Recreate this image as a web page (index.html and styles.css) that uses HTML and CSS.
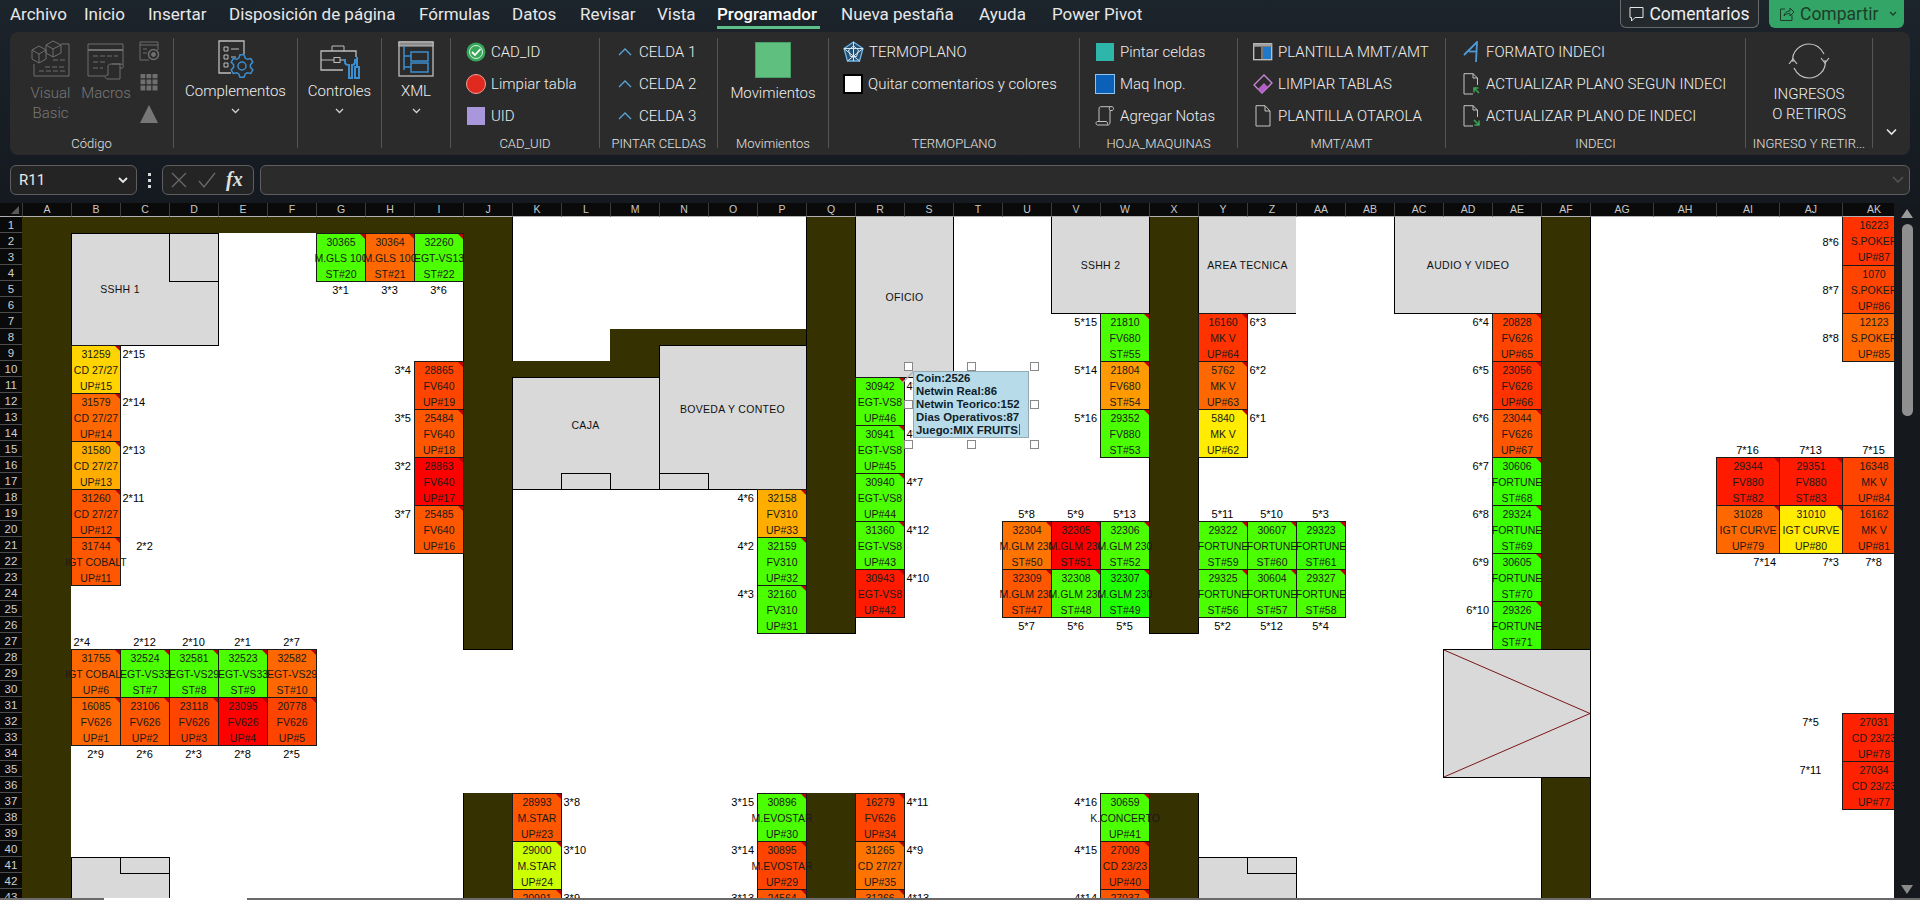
FILE: index.html
```html
<!DOCTYPE html>
<html lang="es">
<head>
<meta charset="utf-8">
<title>Plano de sala</title>
<link rel="stylesheet" href="styles.css">
</head>
<body>
<header class="topbar">
  <nav class="tabs">
    <span class="tab">Archivo</span><span class="tab">Inicio</span><span class="tab">Insertar</span><span class="tab">Disposición de página</span><span class="tab">Fórmulas</span><span class="tab">Datos</span><span class="tab">Revisar</span><span class="tab">Vista</span><span class="tab"><b class="active">Programador</b></span><span class="tab">Nueva pestaña</span><span class="tab">Ayuda</span><span class="tab">Power Pivot</span>
  </nav>
  <div class="actions">
    <button class="comments"><svg width="15" height="18" viewBox="0 0 15 18"><path d="M1 2.500H14V12.500H6L2.500 16V12.500H1Z" fill="none" stroke="#e6e6e6"/></svg>Comentarios</button>
    <button class="share"><svg width="16" height="16" viewBox="0 0 16 16" fill="none" stroke="#1d3d2a"><path d="M6 3H1.500V14.500H13V9"/><path d="M5 10C5.500 6.500 8 5 11 5V2L15 6L11 10V7.500C8.500 7.500 6.500 8 5 10Z"/></svg>Compartir<svg class="share-caret" width="8" height="6" viewBox="0 0 8 6"><path d="M1 1L4 4L7 1" fill="none" stroke="#1d3d2a" stroke-width="1.300"/></svg></button>
  </div>
</header>

<section class="ribbon">
  <div class="group g-code">
    <div class="body code-body">
      <div class="big off vb"><svg width="39" height="37" viewBox="0 0 39 37" fill="none" stroke="#6f6f6f"><path d="M30 4H38V36H3V24"/><path d="M14 27H34M8 31H34M22 20H34" stroke-dasharray="5 2"/><path d="M1 10L8 6L15 10V19L8 23L1 19ZM1 10L8 14L15 10M8 14V23"/><path d="M15 5L22 1L30 5V13L22 17L15 13ZM15 5L22 9L30 5M22 9V17"/></svg><span>Visual<br>Basic</span></div>
      <div class="big off mc"><svg width="38" height="37" viewBox="0 0 38 37" fill="none" stroke="#6f6f6f"><path d="M36 22V1H1V33H18"/><path d="M1 7H36" stroke-width="2"/><path d="M6 13H31M6 19H20M6 25H16" stroke-dasharray="5 2"/><path d="M21 36H33V21H25M21 36C18 36 17 33 20 32H21V23C21 21 24 21 25 21H34C37 21 37 25 35 25H33"/></svg><span>Macros</span></div>
      <div class="mini-col">
        <svg width="21" height="20" viewBox="0 0 21 20" fill="none" stroke="#6f6f6f"><path d="M1 1H19V9M1 1V19H10M1 4H19" /><path d="M4 8H8M4 12H8"/><circle cx="14.500" cy="13.500" r="5" stroke-width="1.500"/><circle cx="14.500" cy="13.500" r="2" fill="#6f6f6f"/></svg>
        <svg width="21" height="19" viewBox="0 0 21 19" fill="#6f6f6f" stroke="#2b2b2b"><rect x="1" y="0.500" width="6" height="5.500"/><rect x="7" y="0.500" width="6" height="5.500"/><rect x="13" y="0.500" width="6" height="5.500"/><rect x="1" y="6" width="6" height="6"/><rect x="7" y="6" width="6" height="6"/><rect x="13" y="6" width="6" height="6"/><rect x="1" y="12" width="6" height="6"/><rect x="7" y="12" width="6" height="6"/><rect x="13" y="12" width="6" height="6"/></svg>
        <svg width="21" height="20" viewBox="0 0 21 20"><path d="M10 1L19 19H1Z" fill="#777"/></svg>
      </div>
    </div>
    <div class="glabel">Código</div>
  </div>
  <div class="group g-add">
    <div class="big"><svg class="ic-add" width="36" height="38" viewBox="0 0 36 38" fill="none" stroke="#bdbdbd"><path d="M13 33H1V1H26V14" stroke-width="1.300"/><path d="M6 7H10V11H6ZM6 15H10V19H6ZM6 23H10V27H6Z"/><path d="M13 9H21M13 17H18"/><g transform="translate(12 14)" stroke="#3b8ed0" stroke-width="1.500"><path d="M8.800 4.100L10 .7H14L15.200 4.100L17.200 5.300L20.800 4.600L22.800 8.100L20.400 10.800V13.200L22.800 15.900L20.800 19.400L17.200 18.700L15.200 19.900L14 23.300H10L8.800 19.900L6.800 18.700L3.200 19.400L1.200 15.900L3.600 13.200V10.800L1.200 8.100L3.200 4.600L6.800 5.300Z"/><circle cx="12" cy="12" r="4"/></g></svg><span>Complementos</span>
      <svg class="caret" width="9" height="6" viewBox="0 0 9 6"><path d="M1 1L4.500 4.500L8 1" fill="none" stroke="#d0d0d0" stroke-width="1.300"/></svg></div>
  </div>
  <div class="group g-ctrl">
    <div class="big"><svg class="ic-ctrl" width="40" height="34" viewBox="0 0 40 34" fill="none" stroke="#bdbdbd"><path d="M23 25H1V6H36V12" stroke-width="1.300"/><path d="M12 6V1H24V6"/><path d="M1 15H14M20 15H25"/><rect x="14" y="12.500" width="6" height="5"/><g stroke="#3b8ed0" stroke-width="2"><path d="M25 14V17C25 19 27 20 29 20V33H32V20C34 20 35 19 35 17V14"/><path d="M37 12V22M35 22H39V33H35Z"/></g></svg><span>Controles</span>
      <svg class="caret" width="9" height="6" viewBox="0 0 9 6"><path d="M1 1L4.500 4.500L8 1" fill="none" stroke="#d0d0d0" stroke-width="1.300"/></svg></div>
  </div>
  <div class="group g-xml">
    <div class="big"><svg class="ic-xml" width="36" height="36" viewBox="0 0 36 36" fill="none" stroke="#bdbdbd"><rect x="1" y="1" width="34" height="34" stroke-width="1.300"/><rect x="1" y="1" width="34" height="4" fill="#8a8a8a"/><g stroke="#3b8ed0" stroke-width="1.500"><path d="M6 5V29M6 15H13M6 26H13"/><rect x="13" y="11" width="17" height="9"/><rect x="13" y="22" width="17" height="9"/></g></svg><span>XML</span>
      <svg class="caret" width="9" height="6" viewBox="0 0 9 6"><path d="M1 1L4.500 4.500L8 1" fill="none" stroke="#d0d0d0" stroke-width="1.300"/></svg></div>
  </div>
  <div class="group g-cad">
    <div class="stack">
      <div class="item"><svg width="20" height="20" viewBox="0 0 20 20"><circle cx="10" cy="10" r="9.500" fill="#37a55a"/><circle cx="10" cy="10" r="6.500" fill="none" stroke="#d8f0df"/><path d="M6 10L9 13L14.500 7" fill="none" stroke="#fff" stroke-width="1.800"/></svg>CAD_ID</div>
      <div class="item"><svg width="20" height="20" viewBox="0 0 20 20"><circle cx="10" cy="10" r="9.500" fill="#e02a20" stroke="#f0a09a" stroke-width="1"/></svg>Limpiar tabla</div>
      <div class="item"><svg width="20" height="20" viewBox="0 0 20 20"><rect x="1" y="1" width="18" height="18" fill="#a897db"/></svg>UID</div>
    </div>
    <div class="glabel">CAD_UID</div>
  </div>
  <div class="group g-paint">
    <div class="stack">
      <div class="item"><svg width="14" height="8" viewBox="0 0 14 8"><path d="M1 7L7 1L13 7" fill="none" stroke="#5aa5dc" stroke-width="1.300"/></svg>CELDA 1</div>
      <div class="item"><svg width="14" height="8" viewBox="0 0 14 8"><path d="M1 7L7 1L13 7" fill="none" stroke="#5aa5dc" stroke-width="1.300"/></svg>CELDA 2</div>
      <div class="item"><svg width="14" height="8" viewBox="0 0 14 8"><path d="M1 7L7 1L13 7" fill="none" stroke="#5aa5dc" stroke-width="1.300"/></svg>CELDA 3</div>
    </div>
    <div class="glabel">PINTAR CELDAS</div>
  </div>
  <div class="group g-mov">
    <div class="big"><i class="mov-square"></i><span>Movimientos</span></div>
    <div class="glabel">Movimientos</div>
  </div>
  <div class="group g-termo">
    <div class="stack">
      <div class="item"><svg width="21" height="22" viewBox="0 0 21 22" fill="none" stroke="#6fb4e6"><path d="M10.500 1L20 7.500L16.500 20H4.500L1 7.500Z" stroke-width="1.300" fill="#26506f"/><path d="M10.500 1V20M1 7.500L16.500 20M20 7.500L4.500 20M1 7.500H20" stroke="#d4e6f2"/><path d="M10.500 5L15.500 9L13.500 15.500H7.500L5.500 9Z" stroke="#d4e6f2"/></svg>TERMOPLANO</div>
      <div class="item"><i class="blank-check"></i>Quitar comentarios y colores</div>
    </div>
    <div class="glabel">TERMOPLANO</div>
  </div>
  <div class="group g-hoja">
    <div class="stack">
      <div class="item"><i class="swatch teal"></i>Pintar celdas</div>
      <div class="item"><i class="swatch blue"></i>Maq Inop.</div>
      <div class="item"><svg width="20" height="20" viewBox="0 0 20 20" fill="none" stroke="#c4c4c4"><path d="M4 16V3C4 1 5 .7 6 .7H17C19 .7 19 4.500 17 4.500H15V16C15 18 14 19 13 19H2.500C.5 19 .5 15.500 2.500 15.500H11.500C12.500 15.500 12.500 19 13 19"/><path d="M15 .7C14 2 14 3.500 15 4.500"/></svg>Agregar Notas</div>
    </div>
    <div class="glabel">HOJA_MAQUINAS</div>
  </div>
  <div class="group g-mmt">
    <div class="stack">
      <div class="item"><svg width="20" height="18" viewBox="0 0 20 18"><rect x=".7" y=".7" width="18" height="16" fill="none" stroke="#c4c4c4" stroke-width="1.300"/><rect x=".7" y=".7" width="18" height="3" fill="#a0a0a0"/><rect x="10" y="4" width="8" height="12" fill="#1f78c8"/><path d="M9 4V16" stroke="#c4c4c4"/></svg>PLANTILLA MMT/AMT</div>
      <div class="item"><svg width="20" height="20" viewBox="0 0 20 20"><path d="M1 11L11 1L19 9L9 19Z" fill="none" stroke="#c886d8" stroke-width="1.300"/><path d="M5 15L11 9L15 13L9 19Z" fill="#b45fc8"/></svg>LIMPIAR TABLAS</div>
      <div class="item"><svg width="20" height="22" viewBox="0 0 20 22" fill="none" stroke="#c4c4c4"><path d="M3 .7H12L17 6V21H3Z"/><path d="M12 .7V6H17"/></svg>PLANTILLA OTAROLA</div>
    </div>
    <div class="glabel">MMT/AMT</div>
  </div>
  <div class="group g-indeci">
    <div class="stack">
      <div class="item"><svg width="18" height="22" viewBox="0 0 18 22" fill="none" stroke="#4f9ad6" stroke-width="1.800"><path d="M1 14L14 1L13 21"/><path d="M6 10.500H13.500"/></svg>FORMATO INDECI</div>
      <div class="item"><svg width="18" height="22" viewBox="0 0 18 22" fill="none"><path d="M10 21H1V.7H10L14.500 5V12M10 .7V5H14.500" stroke="#c4c4c4"/><path d="M16 20L11 15M11 19.500V15H15.500" stroke="#3aa655" stroke-width="1.500"/></svg>ACTUALIZAR PLANO SEGUN INDECI</div>
      <div class="item"><svg width="18" height="22" viewBox="0 0 18 22" fill="none"><path d="M10 21H1V.7H10L14.500 5V12M10 .7V5H14.500" stroke="#c4c4c4"/><path d="M11 15L16 20M16 15.500V20H11.500" stroke="#3aa655" stroke-width="1.500"/></svg>ACTUALIZAR PLANO DE INDECI</div>
    </div>
    <div class="glabel">INDECI</div>
  </div>
  <div class="group g-ing">
    <div class="big"><svg class="ic-ing" width="42" height="36" viewBox="0 0 42 36" fill="none" stroke="#c4c4c4" stroke-width="1.200"><path d="M5 19C3 8 13 1 21 1C28 1 33 5 36 11"/><path d="M37 17C39 28 29 35 21 35C14 35 9 31 6 25"/><path d="M1 15L5 20L9 15M33 21L37 16L41 21" transform="matrix(1 0 0 -1 0 36)"/></svg><span>INGRESOS<br>O RETIROS</span></div>
    <div class="glabel">INGRESO Y RETIR...</div>
  </div>
  <div class="collapse"><svg width="11" height="8" viewBox="0 0 11 8"><path d="M1 1.500L5.500 6L10 1.500" fill="none" stroke="#e6e6e6" stroke-width="1.600"/></svg></div>
</section>

<section class="formula">
  <div class="namebox"><span>R11</span><svg width="10" height="7" viewBox="0 0 10 7"><path d="M1 1L5 5L9 1" fill="none" stroke="#e8e8e8" stroke-width="1.800"/></svg></div>
  <div class="grip"><i></i><i></i><i></i></div>
  <div class="fxbox">
    <svg width="16" height="16" viewBox="0 0 16 16"><path d="M1 1L15 15M15 1L1 15" stroke="#6a6a6a" stroke-width="1.300"/></svg>
    <svg width="18" height="16" viewBox="0 0 18 16"><path d="M1 9L6 15L17 1" fill="none" stroke="#6a6a6a" stroke-width="1.300"/></svg>
    <span class="fx">fx</span>
  </div>
  <div class="input"><svg width="12" height="8" viewBox="0 0 12 8"><path d="M1 1L6 6L11 1" fill="none" stroke="#555" stroke-width="1.500"/></svg></div>
</section>

<main class="sheetwrap">
  <div class="sheet">
    <div class="corner"><svg width="8" height="8" viewBox="0 0 8 8"><path d="M8 0V8H0Z" fill="#5a5a5a"/></svg></div>
    <div class="ch col-A">A</div><div class="ch col-B">B</div><div class="ch col-C">C</div><div class="ch col-D">D</div><div class="ch col-E">E</div><div class="ch col-F">F</div><div class="ch col-G">G</div><div class="ch col-H">H</div><div class="ch col-I">I</div><div class="ch col-J">J</div><div class="ch col-K">K</div><div class="ch col-L">L</div><div class="ch col-M">M</div><div class="ch col-N">N</div><div class="ch col-O">O</div><div class="ch col-P">P</div><div class="ch col-Q">Q</div><div class="ch col-R">R</div><div class="ch col-S">S</div><div class="ch col-T">T</div><div class="ch col-U">U</div><div class="ch col-V">V</div><div class="ch col-W">W</div><div class="ch col-X">X</div><div class="ch col-Y">Y</div><div class="ch col-Z">Z</div><div class="ch col-AA">AA</div><div class="ch col-AB">AB</div><div class="ch col-AC">AC</div><div class="ch col-AD">AD</div><div class="ch col-AE">AE</div><div class="ch col-AF">AF</div><div class="ch col-AG">AG</div><div class="ch col-AH">AH</div><div class="ch col-AI">AI</div><div class="ch col-AJ">AJ</div><div class="ch col-AK">AK</div>

    <div class="rh row-1">1</div><div class="rh row-2">2</div><div class="rh row-3">3</div><div class="rh row-4">4</div><div class="rh row-5">5</div><div class="rh row-6">6</div><div class="rh row-7">7</div><div class="rh row-8">8</div><div class="rh row-9">9</div><div class="rh row-10">10</div><div class="rh row-11">11</div><div class="rh row-12">12</div><div class="rh row-13">13</div><div class="rh row-14">14</div><div class="rh row-15">15</div><div class="rh row-16">16</div><div class="rh row-17">17</div><div class="rh row-18">18</div><div class="rh row-19">19</div><div class="rh row-20">20</div><div class="rh row-21">21</div><div class="rh row-22">22</div><div class="rh row-23">23</div><div class="rh row-24">24</div><div class="rh row-25">25</div><div class="rh row-26">26</div><div class="rh row-27">27</div><div class="rh row-28">28</div><div class="rh row-29">29</div><div class="rh row-30">30</div><div class="rh row-31">31</div><div class="rh row-32">32</div><div class="rh row-33">33</div><div class="rh row-34">34</div><div class="rh row-35">35</div><div class="rh row-36">36</div><div class="rh row-37">37</div><div class="rh row-38">38</div><div class="rh row-39">39</div><div class="rh row-40">40</div><div class="rh row-41">41</div><div class="rh row-42">42</div><div class="rh row-43">43</div>

    <!-- muros -->
    <div class="wall col-A row-1 to-end bare"></div>
    <div class="wall col-J row-1 h27"></div>
    <div class="wall col-A w10 row-1 bare"></div>
    <div class="wall col-Q row-1 h26"></div>
    <div class="wall col-X row-1 h26"></div>
    <div class="wall col-AF row-1 h35"></div>
    <div class="wall col-K w3 row-10 bare"></div>
    <div class="wall col-M row-8 h3 bare"></div>
    <div class="wall col-M w4 row-8 bare"></div>
    <div class="wall col-J row-37 to-end"></div>
    <div class="wall col-Q row-37 to-end"></div>
    <div class="wall col-X row-37 to-end"></div>
    <div class="wall col-AF row-36 to-end"></div>

    <!-- ambientes -->
    <div class="room col-B w3 row-2 h7"></div>
    <div class="room col-D row-2 h3"></div>
    <div class="tag col-B w2 row-5">SSHH 1</div>
    <div class="room col-K w3 row-11 h7"></div>
    <div class="room col-L row-17"></div>
    <div class="tag col-K w3 row-13 h2">CAJA</div>
    <div class="room col-N w3 row-9 h9"></div>
    <div class="room col-N row-17"></div>
    <div class="tag col-N w3 row-12 h2">BOVEDA Y CONTEO</div>
    <div class="room col-R w2 row-1 h10 notop">OFICIO</div>
    <div class="room col-V w2 row-1 h6 notop">SSHH 2</div>
    <div class="room col-Y w2 row-1 h6 notop noright">AREA TECNICA</div>
    <div class="room col-AC w3 row-1 h6 notop">AUDIO Y VIDEO</div>
    <div class="room col-B w2 row-41 to-end"></div>
    <div class="room col-C row-41"></div>
    <div class="room col-Y w2 row-41 to-end"></div>
    <div class="room col-Z row-41"></div>
    <div class="room ramp col-AD w3 row-28 h8"><svg width="100%" height="100%" viewBox="0 0 100 100" preserveAspectRatio="none"><path d="M0 0L100 50L0 100" fill="none" stroke="#7b1616" vector-effect="non-scaling-stroke"/></svg></div>

    <!-- maquinas -->
    <div class="m col-G row-2 g1"><span>30365</span><span>M.GLS 100</span><span>ST#20</span></div>
    <div class="m col-H row-2 o2"><span>30364</span><span>M.GLS 100</span><span>ST#21</span></div>
    <div class="m col-I row-2 g1"><span>32260</span><span>EGT-VS13</span><span>ST#22</span></div>
    <div class="m col-B row-9 y2"><span>31259</span><span>CD 27/27</span><span>UP#15</span></div>
    <div class="m col-B row-12 o2"><span>31579</span><span>CD 27/27</span><span>UP#14</span></div>
    <div class="m col-B row-15 a1"><span>31580</span><span>CD 27/27</span><span>UP#13</span></div>
    <div class="m col-B row-18 o3"><span>31260</span><span>CD 27/27</span><span>UP#12</span></div>
    <div class="m col-B row-21 o3"><span>31744</span><span>IGT COBALT</span><span>UP#11</span></div>
    <div class="m col-I row-10 o4"><span>28865</span><span>FV640</span><span>UP#19</span></div>
    <div class="m col-I row-13 o3"><span>25484</span><span>FV640</span><span>UP#18</span></div>
    <div class="m col-I row-16 r0"><span>28863</span><span>FV640</span><span>UP#17</span></div>
    <div class="m col-I row-19 o3"><span>25485</span><span>FV640</span><span>UP#16</span></div>

    <div class="m col-B row-28 o2"><span>31755</span><span>IGT COBALT</span><span>UP#6</span></div>
    <div class="m col-C row-28 g1"><span>32524</span><span>EGT-VS33</span><span>ST#7</span></div>
    <div class="m col-D row-28 g1"><span>32581</span><span>EGT-VS29</span><span>ST#8</span></div>
    <div class="m col-E row-28 g1"><span>32523</span><span>EGT-VS33</span><span>ST#9</span></div>
    <div class="m col-F row-28 o2"><span>32582</span><span>EGT-VS29</span><span>ST#10</span></div>
    <div class="m col-B row-31 o2"><span>16085</span><span>FV626</span><span>UP#1</span></div>
    <div class="m col-C row-31 o3"><span>23106</span><span>FV626</span><span>UP#2</span></div>
    <div class="m col-D row-31 o4"><span>23118</span><span>FV626</span><span>UP#3</span></div>
    <div class="m col-E row-31 r0"><span>23095</span><span>FV626</span><span>UP#4</span></div>
    <div class="m col-F row-31 o4"><span>20778</span><span>FV626</span><span>UP#5</span></div>

    <div class="m col-P row-18 a1"><span>32158</span><span>FV310</span><span>UP#33</span></div>
    <div class="m col-P row-21 g1"><span>32159</span><span>FV310</span><span>UP#32</span></div>
    <div class="m col-P row-24 g1"><span>32160</span><span>FV310</span><span>UP#31</span></div>
    <div class="m col-R row-11 g1"><span>30942</span><span>EGT-VS8</span><span>UP#46</span></div>
    <div class="m col-R row-14 g1"><span>30941</span><span>EGT-VS8</span><span>UP#45</span></div>
    <div class="m col-R row-17 g1"><span>30940</span><span>EGT-VS8</span><span>UP#44</span></div>
    <div class="m col-R row-20 g1"><span>31360</span><span>EGT-VS8</span><span>UP#43</span></div>
    <div class="m col-R row-23 r1"><span>30943</span><span>EGT-VS8</span><span>UP#42</span></div>

    <div class="m col-U row-20 o1"><span>32304</span><span>M.GLM 230</span><span>ST#50</span></div>
    <div class="m col-V row-20 r0"><span>32305</span><span>M.GLM 230</span><span>ST#51</span></div>
    <div class="m col-W row-20 g1"><span>32306</span><span>M.GLM 230</span><span>ST#52</span></div>
    <div class="m col-U row-23 o3"><span>32309</span><span>M.GLM 230</span><span>ST#47</span></div>
    <div class="m col-V row-23 g1"><span>32308</span><span>M.GLM 230</span><span>ST#48</span></div>
    <div class="m col-W row-23 g3"><span>32307</span><span>M.GLM 230</span><span>ST#49</span></div>
    <div class="m col-Y row-20 g1"><span>29322</span><span>FORTUNE</span><span>ST#59</span></div>
    <div class="m col-Z row-20 g1"><span>30607</span><span>FORTUNE</span><span>ST#60</span></div>
    <div class="m col-AA row-20 g2"><span>29323</span><span>FORTUNE</span><span>ST#61</span></div>
    <div class="m col-Y row-23 g1"><span>29325</span><span>FORTUNE</span><span>ST#56</span></div>
    <div class="m col-Z row-23 g1"><span>30604</span><span>FORTUNE</span><span>ST#57</span></div>
    <div class="m col-AA row-23 g1"><span>29327</span><span>FORTUNE</span><span>ST#58</span></div>

    <div class="m col-W row-7 g1"><span>21810</span><span>FV680</span><span>ST#55</span></div>
    <div class="m col-W row-10 a2"><span>21804</span><span>FV680</span><span>ST#54</span></div>
    <div class="m col-W row-13 g1"><span>29352</span><span>FV880</span><span>ST#53</span></div>
    <div class="m col-Y row-7 o5"><span>16160</span><span>MK V</span><span>UP#64</span></div>
    <div class="m col-Y row-10 o2"><span>5762</span><span>MK V</span><span>UP#63</span></div>
    <div class="m col-Y row-13 y1"><span>5840</span><span>MK V</span><span>UP#62</span></div>
    <div class="m col-AE row-7 o4"><span>20828</span><span>FV626</span><span>UP#65</span></div>
    <div class="m col-AE row-10 o5"><span>23056</span><span>FV626</span><span>UP#66</span></div>
    <div class="m col-AE row-13 o3"><span>23044</span><span>FV626</span><span>UP#67</span></div>
    <div class="m col-AE row-16 g2"><span>30606</span><span>FORTUNE</span><span>ST#68</span></div>
    <div class="m col-AE row-19 g2"><span>29324</span><span>FORTUNE</span><span>ST#69</span></div>
    <div class="m col-AE row-22 g2"><span>30605</span><span>FORTUNE</span><span>ST#70</span></div>
    <div class="m col-AE row-25 g2"><span>29326</span><span>FORTUNE</span><span>ST#71</span></div>

    <div class="m col-AK row-1 o5 notop"><span>16223</span><span>S.POKER</span><span>UP#87</span></div>
    <div class="m col-AK row-4 o4"><span>1070</span><span>S.POKER</span><span>UP#86</span></div>
    <div class="m col-AK row-7 o2"><span>12123</span><span>S.POKER</span><span>UP#85</span></div>
    <div class="m col-AI row-16 r1"><span>29344</span><span>FV880</span><span>ST#82</span></div>
    <div class="m col-AJ row-16 r1"><span>29351</span><span>FV880</span><span>ST#83</span></div>
    <div class="m col-AK row-16 o4"><span>16348</span><span>MK V</span><span>UP#84</span></div>
    <div class="m col-AI row-19 o2"><span>31028</span><span>IGT CURVE</span><span>UP#79</span></div>
    <div class="m col-AJ row-19 y1"><span>31010</span><span>IGT CURVE</span><span>UP#80</span></div>
    <div class="m col-AK row-19 o4"><span>16162</span><span>MK V</span><span>UP#81</span></div>
    <div class="m col-AK row-32 r2"><span>27031</span><span>CD 23/23</span><span>UP#78</span></div>
    <div class="m col-AK row-35 r2"><span>27034</span><span>CD 23/23</span><span>UP#77</span></div>

    <div class="m col-K row-37 o3"><span>28993</span><span>M.STAR</span><span>UP#23</span></div>
    <div class="m col-K row-40 lime"><span>29000</span><span>M.STAR</span><span>UP#24</span></div>
    <div class="m col-K row-43 o2"><span>20991</span></div>
    <div class="m col-P row-37 g1"><span>30896</span><span>M.EVOSTAR</span><span>UP#30</span></div>
    <div class="m col-P row-40 o4"><span>30895</span><span>M.EVOSTAR</span><span>UP#29</span></div>
    <div class="m col-P row-43 o3"><span>24564</span></div>
    <div class="m col-R row-37 o4"><span>16279</span><span>FV626</span><span>UP#34</span></div>
    <div class="m col-R row-40 o1"><span>31265</span><span>CD 27/27</span><span>UP#35</span></div>
    <div class="m col-R row-43 o2"><span>31266</span></div>
    <div class="m col-W row-37 g1"><span>30659</span><span>K.CONCERTO</span><span>UP#41</span></div>
    <div class="m col-W row-40 o4"><span>27009</span><span>CD 23/23</span><span>UP#40</span></div>
    <div class="m col-W row-43 o3"><span>27037</span></div>

    <!-- ubicaciones -->
    <div class="lb col-G row-5">3*1</div><div class="lb col-H row-5">3*3</div><div class="lb col-I row-5">3*6</div>
    <div class="lb l col-C row-9">2*15</div><div class="lb l col-C row-12">2*14</div><div class="lb l col-C row-15">2*13</div><div class="lb l col-C row-18">2*11</div><div class="lb col-C row-21">2*2</div>
    <div class="lb e col-H row-10">3*4</div><div class="lb e col-H row-13">3*5</div><div class="lb e col-H row-16">3*2</div><div class="lb e col-H row-19">3*7</div>
    <div class="lb l col-B row-27">2*4</div><div class="lb col-C row-27">2*12</div><div class="lb col-D row-27">2*10</div><div class="lb col-E row-27">2*1</div><div class="lb col-F row-27">2*7</div>
    <div class="lb col-B row-34">2*9</div><div class="lb col-C row-34">2*6</div><div class="lb col-D row-34">2*3</div><div class="lb col-E row-34">2*8</div><div class="lb col-F row-34">2*5</div>
    <div class="lb e col-O row-18">4*6</div><div class="lb e col-O row-21">4*2</div><div class="lb e col-O row-24">4*3</div>
    <div class="lb l col-S row-11">4*5</div><div class="lb l col-S row-14">4*8</div><div class="lb l col-S row-17">4*7</div><div class="lb l col-S row-20">4*12</div><div class="lb l col-S row-23">4*10</div>
    <div class="lb col-U row-19">5*8</div><div class="lb col-V row-19">5*9</div><div class="lb col-W row-19">5*13</div><div class="lb col-Y row-19">5*11</div><div class="lb col-Z row-19">5*10</div><div class="lb col-AA row-19">5*3</div>
    <div class="lb col-U row-26">5*7</div><div class="lb col-V row-26">5*6</div><div class="lb col-W row-26">5*5</div><div class="lb col-Y row-26">5*2</div><div class="lb col-Z row-26">5*12</div><div class="lb col-AA row-26">5*4</div>
    <div class="lb e col-V row-7">5*15</div><div class="lb e col-V row-10">5*14</div><div class="lb e col-V row-13">5*16</div>
    <div class="lb l col-Z row-7">6*3</div><div class="lb l col-Z row-10">6*2</div><div class="lb l col-Z row-13">6*1</div>
    <div class="lb e col-AD row-7">6*4</div><div class="lb e col-AD row-10">6*5</div><div class="lb e col-AD row-13">6*6</div><div class="lb e col-AD row-16">6*7</div><div class="lb e col-AD row-19">6*8</div><div class="lb e col-AD row-22">6*9</div><div class="lb e col-AD row-25">6*10</div>
    <div class="lb e col-AJ row-2">8*6</div><div class="lb e col-AJ row-5">8*7</div><div class="lb e col-AJ row-8">8*8</div>
    <div class="lb col-AI row-15">7*16</div><div class="lb col-AJ row-15">7*13</div><div class="lb col-AK row-15">7*15</div>
    <div class="lb e col-AI row-22">7*14</div><div class="lb e col-AJ row-22">7*3</div><div class="lb col-AK row-22">7*8</div>
    <div class="lb col-AJ row-32">7*5</div><div class="lb col-AJ row-35">7*11</div>
    <div class="lb l col-L row-37">3*8</div><div class="lb l col-L row-40">3*10</div><div class="lb l col-L row-43">3*9</div>
    <div class="lb e col-O row-37">3*15</div><div class="lb e col-O row-40">3*14</div><div class="lb e col-O row-43">3*13</div>
    <div class="lb l col-S row-37">4*11</div><div class="lb l col-S row-40">4*9</div><div class="lb l col-S row-43">4*13</div>
    <div class="lb e col-V row-37">4*16</div><div class="lb e col-V row-40">4*15</div><div class="lb e col-V row-43">4*14</div>

    <!-- comentario seleccionado -->
    <div class="note">
      <svg class="note-lead" width="12" height="12" viewBox="0 0 12 12"><path d="M12 0L0 12" stroke="#b0b0b0" stroke-width="1.500"/></svg>
      <p>Coin:2526</p><p>Netwin Real:86</p><p>Netwin Teorico:152</p><p>Dias Operativos:87</p><p>Juego:MIX FRUITS<i class="caretbar"></i></p>
      <i class="h tl"></i><i class="h tm"></i><i class="h tr"></i><i class="h ml"></i><i class="h mr"></i><i class="h bl"></i><i class="h bm"></i><i class="h br"></i>
    </div>
  </div>
  <aside class="vscroll">
    <svg width="12" height="9" viewBox="0 0 12 9"><path d="M6 0L12 9H0Z" fill="#9a9a9a"/></svg>
    <i class="thumb"></i>
    <svg class="down" width="12" height="9" viewBox="0 0 12 9"><path d="M6 9L0 0H12Z" fill="#8a8a8a"/></svg>
  </aside>
</main>
<footer class="hscroll"><i class="hs-a"></i><i class="hs-b"></i><i class="hs-c"></i></footer>
</body>
</html>
```

FILE: styles.css
```css
* { box-sizing: border-box; }
html, body { margin: 0; height: 100%; }
body {
  width: 1920px; height: 900px; overflow: hidden;
  background: linear-gradient(#1c242c 0, #1a2027 60px, #141a20 200px);
  font-family: Roboto, "Liberation Sans", sans-serif;
  color: #e8e8e8;
  display: flex; flex-direction: column;
}

/* top bar */
.topbar { height: 32px; display: flex; flex: none; }
.tabs {
  padding-left: 10px; flex: 1;
  display: grid;
  grid-template-columns: 74px 64px 81px 190px 93px 68px 77px 60px 124px 138px 73px auto;
  font-size: 17px; line-height: 22px; padding-top: 3px; align-items: start;
}
.tab b { display: inline-block; font-weight: 500; color: #fff; border-bottom: 3px solid #5dbf8a; padding-bottom: 1px; width: 103px; }
.actions { display: flex; width: 310px; flex: none; gap: 10px; padding-right: 16px; justify-content: flex-end; }
.actions button { font: inherit; font-size: 17.5px; height: 28px; display: flex; align-items: center; gap: 5px; border-radius: 0 0 6px 6px; padding: 0; flex: none; }
.comments { width: 139px; background: #24292e; border: 1px solid #6a6a6a; border-top: 0; color: #eee; justify-content: center; }
.share { width: 135px; background: #33a566; border: 0; color: #1d3d2a; padding-left: 10px !important; }
.share-caret { margin-left: 6px; }

/* ribbon */
.ribbon {
  flex: none; height: 123px; margin: 0 10px; width: 1900px;
  background: #2b2b2b; border-radius: 8px;
  display: flex; padding-top: 6px;
  font-size: 15px; font-weight: 300; color: #efefef;
}
.group { height: 110px; border-right: 1px solid #555; display: flex; flex-direction: column; flex: none; }
.glabel { height: 16px; line-height: 16px; margin-bottom: -4px; text-align: center; font-size: 13px; white-space: nowrap; color: #e4e4e4; flex: none; }
.g-code { width: 164px; }
.g-add { width: 124px; }
.g-ctrl { width: 84px; }
.g-xml { width: 69px; }
.g-cad { width: 149px; }
.g-paint { width: 118px; }
.g-mov { width: 111px; }
.g-termo { width: 251px; }
.g-hoja { width: 158px; }
.g-mmt { width: 208px; }
.g-indeci { width: 300px; }
.g-ing { width: 127px; }
.collapse { flex: 1; display: flex; align-items: flex-end; justify-content: center; padding-bottom: 12px; height: 110px; }

.big { display: flex; flex-direction: column; align-items: center; text-align: center; line-height: 20px; flex: 1; }
.big span { white-space: nowrap; }
.caret { margin-top: 7px; }
.code-body { display: flex; flex: 1; color: #787878; }
.off { flex: none; padding-top: 2px; }
.off span { margin-top: 6px; }
.vb { width: 39px; margin-left: 21px; }
.mc { width: 38px; margin-left: 17px; padding-top: 5px; }
.mc span { margin-top: 3px; }
.mini-col { display: flex; flex-direction: column; margin-left: 14px; gap: 12px; padding-top: 3px; }
.ic-add { margin-top: 2px; margin-bottom: 3px; }
.ic-ctrl { margin-top: 7px; margin-bottom: 2px; }
.ic-xml { margin-top: 3px; margin-bottom: 4px; }
.ic-ing { margin-top: 5px; margin-bottom: 5px; }
.mov-square { display: block; width: 36px; height: 36px; background: #5fbf7f; border: 1px solid #4b9d67; margin: 4px 0 5px; }

.stack { flex: 1; display: grid; grid-template-rows: repeat(3, 32px); margin-top: -2px; align-content: start; }
.item { display: flex; align-items: center; gap: 5px; white-space: nowrap; }
.g-cad .stack { padding-left: 15px; }
.g-paint .stack { padding-left: 18px; }
.g-paint .item { gap: 7px; }
.g-termo .stack { padding-left: 14px; }
.g-hoja .stack { padding-left: 15px; }
.g-mmt .stack { padding-left: 15px; }
.g-indeci .stack { padding-left: 17px; }
.blank-check { width: 20px; height: 20px; background: #fff; border: 2px solid #000; flex: none; }
.swatch { width: 20px; height: 20px; flex: none; }
.swatch.teal { background: #2fb6ab; border: 1px solid #2b2b2b; }
.swatch.blue { background: #0b60b8; border: 1px solid #8cc4ee; }

/* formula bar */
.formula { flex: none; height: 30px; margin: 10px 10px 0; width: 1900px; display: flex; }
.namebox { width: 127px; height: 30px; border: 1px solid #5e5e5e; border-radius: 6px; background: #242424; display: flex; align-items: center; justify-content: space-between; padding: 0 8px; font-size: 15px; }
.grip { width: 25px; display: flex; flex-direction: column; align-items: center; justify-content: center; gap: 3px; }
.grip i { width: 3px; height: 3px; background: #d8d8d8; display: block; }
.fxbox { width: 92px; height: 30px; border: 1px solid #5e5e5e; border-radius: 6px; background: #242424; display: flex; align-items: center; padding-left: 8px; gap: 11px; }
.fx { font-family: "Liberation Serif", serif; font-style: italic; font-weight: 700; font-size: 20px; color: #e0e0e0; line-height: 20px; margin-top: -3px; margin-left: -1px; }
.input { margin-left: 6px; flex: 1; height: 30px; border: 1px solid #5e5e5e; border-radius: 6px; background: #2b2b2b; display: flex; align-items: center; justify-content: flex-end; padding-right: 5px; }

/* sheet */
.sheetwrap { flex: none; height: 695px; margin-top: 8px; display: flex; width: 1920px; }
.sheet {
  width: 1894px; height: 695px; overflow: hidden; position: relative;
  background: #fff;
  display: grid;
  grid-template-columns: 22px repeat(32, 49px) repeat(5, 63px);
  grid-template-rows: 14px repeat(44, 16px);
  font-family: "Liberation Sans", sans-serif;
  font-size: 10.5px; color: #111;
}
.corner { grid-column: 1; grid-row: 1; background: #0c0c0c; border-bottom: 1px solid #b0b0b0; display: flex; align-items: center; justify-content: flex-end; padding-right: 3px; }
.ch { grid-row: 1; background: #0a0a0a; color: #c8c8c8; border-left: 1px solid #3c3c3c; border-bottom: 1px solid #b0b0b0; font-size: 10.5px; text-align: center; line-height: 13px; }
.rh { grid-column: 1; background: #0a0a0a; color: #cfcfcf; border-bottom: 1px solid #4c4c4c; font-size: 11.5px; line-height: 16px; text-align: center; }

.col-A { grid-column-start: 2; } .col-B { grid-column-start: 3; } .col-C { grid-column-start: 4; } .col-D { grid-column-start: 5; } .col-E { grid-column-start: 6; } .col-F { grid-column-start: 7; } .col-G { grid-column-start: 8; } .col-H { grid-column-start: 9; } .col-I { grid-column-start: 10; } .col-J { grid-column-start: 11; } .col-K { grid-column-start: 12; } .col-L { grid-column-start: 13; } .col-M { grid-column-start: 14; } .col-N { grid-column-start: 15; } .col-O { grid-column-start: 16; } .col-P { grid-column-start: 17; } .col-Q { grid-column-start: 18; } .col-R { grid-column-start: 19; } .col-S { grid-column-start: 20; } .col-T { grid-column-start: 21; } .col-U { grid-column-start: 22; } .col-V { grid-column-start: 23; } .col-W { grid-column-start: 24; } .col-X { grid-column-start: 25; } .col-Y { grid-column-start: 26; } .col-Z { grid-column-start: 27; } .col-AA { grid-column-start: 28; } .col-AB { grid-column-start: 29; } .col-AC { grid-column-start: 30; } .col-AD { grid-column-start: 31; } .col-AE { grid-column-start: 32; } .col-AF { grid-column-start: 33; } .col-AG { grid-column-start: 34; } .col-AH { grid-column-start: 35; } .col-AI { grid-column-start: 36; } .col-AJ { grid-column-start: 37; } .col-AK { grid-column-start: 38; }

.row-1 { grid-row-start: 2; } .row-2 { grid-row-start: 3; } .row-3 { grid-row-start: 4; } .row-4 { grid-row-start: 5; } .row-5 { grid-row-start: 6; } .row-6 { grid-row-start: 7; } .row-7 { grid-row-start: 8; } .row-8 { grid-row-start: 9; } .row-9 { grid-row-start: 10; } .row-10 { grid-row-start: 11; } .row-11 { grid-row-start: 12; } .row-12 { grid-row-start: 13; } .row-13 { grid-row-start: 14; } .row-14 { grid-row-start: 15; } .row-15 { grid-row-start: 16; } .row-16 { grid-row-start: 17; } .row-17 { grid-row-start: 18; } .row-18 { grid-row-start: 19; } .row-19 { grid-row-start: 20; } .row-20 { grid-row-start: 21; } .row-21 { grid-row-start: 22; } .row-22 { grid-row-start: 23; } .row-23 { grid-row-start: 24; } .row-24 { grid-row-start: 25; } .row-25 { grid-row-start: 26; } .row-26 { grid-row-start: 27; } .row-27 { grid-row-start: 28; } .row-28 { grid-row-start: 29; } .row-29 { grid-row-start: 30; } .row-30 { grid-row-start: 31; } .row-31 { grid-row-start: 32; } .row-32 { grid-row-start: 33; } .row-33 { grid-row-start: 34; } .row-34 { grid-row-start: 35; } .row-35 { grid-row-start: 36; } .row-36 { grid-row-start: 37; } .row-37 { grid-row-start: 38; } .row-38 { grid-row-start: 39; } .row-39 { grid-row-start: 40; } .row-40 { grid-row-start: 41; } .row-41 { grid-row-start: 42; } .row-42 { grid-row-start: 43; } .row-43 { grid-row-start: 44; }

.w2 { grid-column-end: span 2; } .w3 { grid-column-end: span 3; } .w4 { grid-column-end: span 4; } .w10 { grid-column-end: span 10; }
.h2 { grid-row-end: span 2; } .h3 { grid-row-end: span 3; } .h6 { grid-row-end: span 6; } .h7 { grid-row-end: span 7; } .h8 { grid-row-end: span 8; } .h9 { grid-row-end: span 9; } .h10 { grid-row-end: span 10; } .h26 { grid-row-end: span 26; } .h27 { grid-row-end: span 27; } .h35 { grid-row-end: span 35; }
.to-end { grid-row-end: -1; }

.wall { background: #363100; border: 1px solid #000; border-top: 0; margin: 0 -1px -1px 0; }
.wall.bare { border: 0; margin: 0; }
.room { background: #d9d9d9; border: 1px solid #000; margin: 0 -1px -1px 0; display: flex; align-items: center; justify-content: center; white-space: nowrap; letter-spacing: .3px; }
.room.notop { border-top: 0; }
.room.noright { border-right: 0; margin-right: 0; }
.tag { display: flex; align-items: center; justify-content: center; white-space: nowrap; letter-spacing: .3px; }
.ramp { display: block; }
.ramp svg { display: block; }

.m {
  grid-row-end: span 3; margin: 0 -1px -1px 0; position: relative;
  border: 1px solid #1a1a1a;
  display: grid; grid-template-columns: minmax(0, 1fr); grid-template-rows: 16px 16px 15px; justify-items: center;
  line-height: 16px; white-space: nowrap; color: #1a1a1a;
}
.m::after { content: ""; position: absolute; top: 0; right: 0; border-top: 5px solid #c00000; border-left: 5px solid transparent; }
.m.notop { border-top: 0; }
.lb { line-height: 18px; white-space: nowrap; text-align: center; font-size: 11px; color: #000; }
.lb.l { text-align: left; padding-left: 2.500px; }
.lb.e { text-align: right; padding-right: 3px; }

.g1 { background: #4cff00; } .g2 { background: #3aff00; } .g3 { background: #1eff00; }
.lime { background: #ccff00; } .y1 { background: #ffec00; } .y2 { background: #ffd400; }
.a1 { background: #ffae00; } .a2 { background: #ff9a00; }
.o1 { background: #ff7400; } .o2 { background: #ff6800; } .o3 { background: #ff5600; } .o4 { background: #ff4400; } .o5 { background: #ff3200; }
.r2 { background: #ff2200; } .r1 { background: #ff1a00; } .r0 { background: #ff0000; }

/* note (overlay) */
.note {
  position: absolute; left: 913px; top: 168px; width: 116px; height: 67px; z-index: 3;
  background: #b7dbe8; border: 1px solid #93a9b4;
  padding: 0 0 0 2px;
  font-family: "Liberation Sans", sans-serif; font-weight: 700; font-size: 11.4px; color: #10202a;
}
.note p { margin: 0; height: 13px; line-height: 13px; white-space: nowrap; }
.note-lead { position: absolute; left: -12px; top: -1px; }
.caretbar { display: inline-block; width: 1px; height: 11px; background: #555; margin-left: 1px; vertical-align: -1px; }
.h { position: absolute; width: 9px; height: 9px; background: #fff; border: 1px solid #888; }
.tl { left: -10px; top: -10px; } .tm { left: 53px; top: -10px; } .tr { left: 116px; top: -10px; }
.ml { left: -10px; top: 28px; } .mr { left: 116px; top: 28px; }
.bl { left: -10px; top: 68px; } .bm { left: 53px; top: 68px; } .br { left: 116px; top: 68px; }

/* scrollbars */
.vscroll { width: 26px; background: #15191e; display: flex; flex-direction: column; align-items: center; padding-top: 6px; }
.thumb { display: block; width: 11px; height: 192px; border-radius: 6px; background: #8f8f8f; margin-top: 6px; }
.down { margin-top: auto; margin-bottom: 4px; }
.hscroll { flex: none; height: 2px; display: flex; width: 1920px; }
.hscroll i { display: block; height: 2px; }
.hs-a { width: 104px; background: #6a6a6a; }
.hs-b { width: 143px; background: #fff; }
.hs-c { flex: 1; background: #6a6a6a; }
```
